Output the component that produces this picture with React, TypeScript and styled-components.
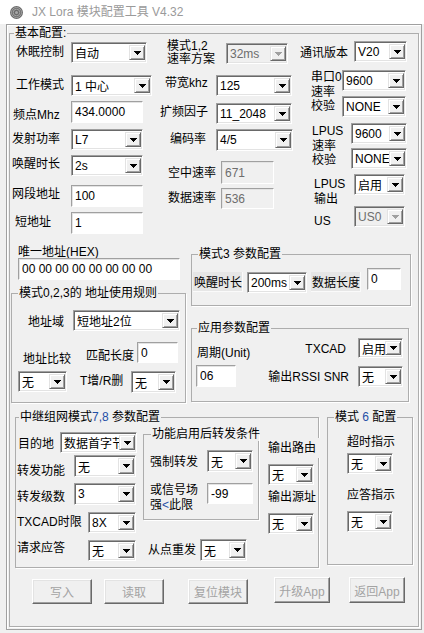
import React from "react";
import styled, { createGlobalStyle, css } from "styled-components";

const GlobalStyle = createGlobalStyle`
  *, *::before, *::after { box-sizing: border-box; }
  html, body { margin: 0; padding: 0; background: #f0f0f0; }
  body {
    font-family: "Liberation Sans", "Noto Sans CJK SC", sans-serif;
    font-size: 12px;
    color: #000;
  }
`;

const Window = styled.div`
  width: 424px;
  height: 633px;
  overflow: hidden;
  background: #f0f0f0;
`;

const TitleBar = styled.div`
  height: 24px;
  background: #ffffff;
  display: flex;
  align-items: center;
  padding-left: 10px;
  gap: 9px;
`;

const TitleText = styled.span`
  color: #9a9a9a;
  font-size: 12px;
  line-height: 14px;
  white-space: nowrap;
`;

const Frame = styled.div`
  margin-left: 6px;
  width: 416px;
  height: 606px;
  border: 1px solid #a0a0a0;
  box-shadow: inset 1px 1px 0 #fff;
  padding: 1px 0 0 2px;
`;

const GroupBox = styled.fieldset<{ $w: number; $h: number; $mt?: number; $ml?: number }>`
  flex: none;
  display: block;
  margin: ${(p) => p.$mt ?? 0}px 0 0 ${(p) => p.$ml ?? 0}px;
  padding: 0;
  min-width: 0;
  width: ${(p) => p.$w}px;
  height: ${(p) => p.$h}px;
  border: 1px solid #adadad;
  box-shadow: 1px 1px 0 #fff;
`;

const Legend = styled.legend<{ $ml: number }>`
  margin-left: ${(p) => p.$ml}px;
  padding: 0 1px;
  font-size: 12px;
  line-height: 14px;
  height: 14px;
  white-space: nowrap;
`;

const Blue = styled.span`
  color: #1f4fa6;
`;

const TopSection = styled.div`
  display: flex;
  align-items: flex-start;
`;

const MidSection = styled.div`
  display: flex;
  align-items: flex-start;
`;

const RelaySection = styled.div`
  display: flex;
  align-items: flex-start;
`;

const FlexRow = styled.div`
  display: flex;
  align-items: flex-start;
`;

const SpreadRow = styled.div`
  display: flex;
  align-items: flex-start;
  justify-content: space-between;
`;

const Column = styled.div<{ $w?: number; $ml?: number; $mt?: number; $mr?: number; $end?: boolean }>`
  flex: none;
  display: flex;
  flex-direction: column;
  align-items: ${(p) => (p.$end ? "flex-end" : "flex-start")};
  ${(p) => p.$w !== undefined && css`width: ${p.$w}px;`}
  margin: ${(p) => p.$mt ?? 0}px ${(p) => p.$mr ?? 0}px 0 ${(p) => p.$ml ?? 0}px;
`;

const Stack = styled.div<{ $gap: number }>`
  display: flex;
  flex-direction: column;
  gap: ${(p) => p.$gap}px;
`;

const Field = styled.div<{ $mt?: number; $ml?: number }>`
  display: flex;
  align-items: flex-start;
  margin-top: ${(p) => p.$mt ?? 0}px;
  margin-left: ${(p) => p.$ml ?? 0}px;
`;

const Label = styled.span<{ $w?: number; $pl?: number; $top?: number; $lh?: number; $mr?: number }>`
  display: block;
  flex: none;
  ${(p) => p.$w !== undefined && css`width: ${p.$w}px;`}
  padding-left: ${(p) => p.$pl ?? 0}px;
  margin-top: ${(p) => p.$top ?? 3}px;
  margin-right: ${(p) => p.$mr ?? 0}px;
  line-height: ${(p) => p.$lh ?? 14}px;
  white-space: nowrap;
`;

const RouteLabel = styled.span<{ $mt: number }>`
  display: block;
  width: 53px;
  height: 20px;
  margin-top: ${(p) => p.$mt}px;
  margin-right: -4px;
  line-height: 20px;
  background: #f0f0f0;
  white-space: nowrap;
`;

const CellLabel = styled.span<{ $ml: number; $mt: number }>`
  flex: none;
  display: flex;
  align-items: center;
  width: 50px;
  height: 20px;
  margin: ${(p) => p.$mt}px 0 0 ${(p) => p.$ml}px;
  padding-left: 1px;
  background: #e6e6e6;
  border-right: 1px solid #fafafa;
  border-bottom: 1px solid #fafafa;
  white-space: nowrap;
`;

const SelectFrame = styled.div<{ $w: number; $h: number; $disabled?: boolean; $ml?: number; $mt?: number }>`
  flex: none;
  display: flex;
  width: ${(p) => p.$w}px;
  height: ${(p) => p.$h}px;
  margin: ${(p) => p.$mt ?? 0}px 0 0 ${(p) => p.$ml ?? 0}px;
  padding: 2px 1px 2px 2px;
  background: ${(p) => (p.$disabled ? "#f0f0f0" : "#fff")};
  border: 1px solid;
  border-color: #a0a0a0 #fff #fff #a0a0a0;
  box-shadow: inset 1px 1px 0 #696969, inset -1px -1px 0 #e3e3e3;
`;

const SelectValue = styled.span<{ $disabled?: boolean }>`
  flex: 1;
  min-width: 0;
  display: flex;
  align-items: center;
  padding-left: 1px;
  overflow: hidden;
  white-space: nowrap;
  color: ${(p) => (p.$disabled ? "#6d6d6d" : "#000")};
`;

const DropButton = styled.span`
  flex: none;
  width: 16px;
  display: flex;
  align-items: center;
  justify-content: center;
  background: #f0f0f0;
  border: 1px solid;
  border-color: #e3e3e3 #696969 #696969 #e3e3e3;
  box-shadow: inset 1px 1px 0 #fff, inset -1px -1px 0 #a0a0a0;
`;

const TextField = styled.input<{ $w: number; $h: number; $ml?: number; $mt?: number }>`
  flex: none;
  display: block;
  width: ${(p) => p.$w}px;
  height: ${(p) => p.$h}px;
  margin: ${(p) => p.$mt ?? 0}px 0 0 ${(p) => p.$ml ?? 0}px;
  padding: 0 0 0 3px;
  font-family: "Liberation Sans", "Noto Sans CJK SC", sans-serif;
  font-size: 12px;
  color: #000;
  background: #fff;
  border: 1px solid;
  border-color: #a0a0a0 #fff #fff #a0a0a0;
  box-shadow: inset 1px 1px 0 #e3e3e3;
  outline: none;
  &:disabled {
    background: #f0f0f0;
    color: #6d6d6d;
  }
`;

const ButtonRow = styled.div`
  display: flex;
  align-items: flex-start;
  margin-top: 9px;
`;

const PushButton = styled.button<{ $w: number; $h: number; $ml: number; $mt?: number }>`
  flex: none;
  width: ${(p) => p.$w}px;
  height: ${(p) => p.$h}px;
  margin: ${(p) => p.$mt ?? 0}px 0 0 ${(p) => p.$ml}px;
  padding: 0;
  font-family: "Liberation Sans", "Noto Sans CJK SC", sans-serif;
  font-size: 12px;
  color: #a3a3a3;
  background: #f0f0f0;
  border: 1px solid;
  border-color: #fff #696969 #696969 #fff;
  box-shadow: inset -1px -1px 0 #a0a0a0, inset 1px 1px 0 #e3e3e3;
`;

function Arrow({ disabled }: { disabled?: boolean }) {
  return (
    <svg width="7" height="4" viewBox="0 0 7 4" shapeRendering="crispEdges">
      <path d="M0 0H7V1H6V2H5V3H4V4H3V3H2V2H1V1H0Z" fill={disabled ? "#a0a0a0" : "#000"} />
    </svg>
  );
}

type SelectProps = { w: number; h?: number; value: string; disabled?: boolean; ml?: number; mt?: number };

function Select({ w, h = 21, value, disabled, ml, mt }: SelectProps) {
  return (
    <SelectFrame $w={w} $h={h} $disabled={disabled} $ml={ml} $mt={mt}>
      <SelectValue $disabled={disabled}>{value}</SelectValue>
      <DropButton>
        <Arrow disabled={disabled} />
      </DropButton>
    </SelectFrame>
  );
}

function AppIcon() {
  return (
    <svg width="13" height="13" viewBox="0 0 13 13">
      <circle cx="6.5" cy="6.5" r="6.5" fill="#6b6b6b" />
      <circle cx="6.5" cy="6.5" r="5" fill="none" stroke="#a8a8a8" strokeWidth="0.9" />
      <circle cx="6.5" cy="6.5" r="3.3" fill="none" stroke="#a8a8a8" strokeWidth="0.9" />
      <circle cx="6.5" cy="6.5" r="1.5" fill="#a8a8a8" />
    </svg>
  );
}

export default function App() {
  return (
    <Window>
      <GlobalStyle />
      <TitleBar>
        <AppIcon />
        <TitleText>JX Lora 模块配置工具 V4.32</TitleText>
      </TitleBar>
      <Frame>
        <GroupBox $w={410} $h={601}>
          <Legend $ml={4}>基本配置:</Legend>

          <TopSection>
            <Column $w={150}>
              <Field $mt={2}>
                <Label $w={61} $pl={6}>休眠控制</Label>
                <Select w={76} value="自动" />
              </Field>
              <Field $mt={12}>
                <Label $w={61} $pl={6}>工作模式</Label>
                <Select w={81} value="1 中心" />
              </Field>
              <Field $mt={5}>
                <Label $w={61} $pl={3} $top={7}>频点Mhz</Label>
                <TextField $w={72} $h={22} defaultValue="434.0000" readOnly />
              </Field>
              <Field $mt={6}>
                <Label $w={61} $pl={2} $top={2.5}>发射功率</Label>
                <Select w={72} value="L7" />
              </Field>
              <Field $mt={5}>
                <Label $w={61} $pl={2} $top={2}>唤醒时长</Label>
                <Select w={72} value="2s" />
              </Field>
              <Field $mt={9}>
                <Label $w={61} $pl={2} $top={2}>网段地址</Label>
                <TextField $w={72} $h={22} defaultValue="100" readOnly />
              </Field>
              <Field $mt={5}>
                <Label $w={61} $pl={5}>短地址</Label>
                <TextField $w={72} $h={22} defaultValue="1" readOnly />
              </Field>
            </Column>

            <Column $w={137}>
              <Field $mt={3}>
                <Label $w={66} $pl={7} $top={-3} $lh={13}>
                  模式1,2
                  <br />
                  速率方案
                </Label>
                <Select w={62} value="32ms" disabled />
              </Field>
              <Field $mt={9}>
                <Label $w={56} $pl={5} $top={1}>带宽khz</Label>
                <Select w={76} value="125" />
              </Field>
              <Field $mt={7}>
                <Label $w={56} $top={1.5}>扩频因子</Label>
                <Select w={76} value="11_2048" />
              </Field>
              <Field $mt={5}>
                <Label $w={56} $pl={10} $top={3}>编码率</Label>
                <Select w={77} h={22} value="4/5" />
              </Field>
              <Field $mt={10}>
                <Label $w={61} $pl={8} $top={4.5}>空中速率</Label>
                <TextField $w={53} $h={23} defaultValue="671" disabled />
              </Field>
              <Field $mt={4}>
                <Label $w={61} $pl={8} $top={2.5}>数据速率</Label>
                <TextField $w={53} $h={21} defaultValue="536" disabled />
              </Field>
            </Column>

            <Column $w={113}>
              <Field $mt={1}>
                <Label $w={57} $pl={3} $top={4.5}>通讯版本</Label>
                <Select w={53} value="V20" />
              </Field>
              <Field $mt={8}>
                <Label $w={45} $pl={14} $top={0} $lh={14.5}>
                  串口0
                  <br />
                  速率
                  <br />
                  校验
                </Label>
                <Stack $gap={5}>
                  <Select w={64} value="9600" />
                  <Select w={64} value="NONE" />
                </Stack>
              </Field>
              <Field $mt={6}>
                <Label $w={54} $pl={15} $top={1} $lh={14.5}>
                  LPUS
                  <br />
                  速率
                  <br />
                  校验
                </Label>
                <Stack $gap={4}>
                  <Select w={56} value="9600" />
                  <Select w={56} value="NONE" />
                </Stack>
              </Field>
              <Field $mt={5}>
                <Label $w={57} $pl={17} $top={3} $lh={14.5}>
                  LPUS
                  <br />
                  输出
                </Label>
                <Select w={51} value="启用" />
              </Field>
              <Field>
                <Label $w={57} $pl={17} $top={8}>US</Label>
                <Select w={51} value="US0" disabled />
              </Field>
            </Column>
          </TopSection>

          <MidSection>
            <Column $w={176}>
              <Label $pl={8} $top={11}>唯一地址(HEX)</Label>
              <TextField $w={162} $h={22} $ml={8} $mt={-1} defaultValue="00 00 00 00 00 00 00 00" readOnly />
              <GroupBox $w={175} $h={117} $mt={6} $ml={1}>
                <Legend $ml={6}>模式0,2,3的 地址使用规则</Legend>
                <Field $mt={10}>
                  <Label $w={61} $pl={16} $top={4.5}>地址域</Label>
                  <Select w={107} value="短地址2位" />
                </Field>
                <Field $mt={11}>
                  <Column $w={68}>
                    <Label $pl={11} $top={10}>地址比较</Label>
                    <Select w={49} ml={6} mt={5} value="无" />
                  </Column>
                  <Column>
                    <Field>
                      <Label $w={57} $pl={6} $top={7}>匹配长度</Label>
                      <TextField $w={41} $h={21} defaultValue="0" readOnly />
                    </Field>
                    <Field $mt={8}>
                      <Label $w={51} $top={3}>T增/R删</Label>
                      <Select w={45} h={22} value="无" />
                    </Field>
                  </Column>
                </Field>
              </GroupBox>
            </Column>

            <Column $ml={5}>
              <GroupBox $w={220} $h={59} $mt={13}>
                <Legend $ml={6}>模式3 参数配置</Legend>
                <Field $mt={7}>
                  <CellLabel $ml={1} $mt={4}>唤醒时长</CellLabel>
                  <Select w={60} ml={4} mt={4} value="200ms" />
                  <CellLabel $ml={4} $mt={4}>数据长度</CellLabel>
                  <TextField $w={34} $h={22} $ml={6} defaultValue="0" readOnly />
                </Field>
              </GroupBox>
              <GroupBox $w={218} $h={81} $mt={15}>
                <Legend $ml={5}>应用参数配置</Legend>
                <SpreadRow>
                  <Column>
                    <Label $pl={5} $top={11}>周期(Unit)</Label>
                    <TextField $w={40} $h={22} $ml={4} $mt={5} defaultValue="06" readOnly />
                  </Column>
                  <Column $mt={3} $mr={5} $end>
                    <Field>
                      <Label $mr={12} $top={4}>TXCAD</Label>
                      <Select w={45} h={20} value="启用" />
                    </Field>
                    <Field $mt={8}>
                      <Label $mr={9} $top={4}>输出RSSI SNR</Label>
                      <Select w={45} value="无" />
                    </Field>
                  </Column>
                </SpreadRow>
              </GroupBox>
            </Column>
          </MidSection>

          <RelaySection>
            <GroupBox $w={304} $h={158} $ml={5} $mt={7}>
              <Legend $ml={3}>
                中继组网模式<Blue>7,8</Blue> 参数配置
              </Legend>
              <FlexRow>
                <Column $w={127}>
                  <Field $mt={8}>
                    <Label $w={44} $pl={2} $top={5}>目的地</Label>
                    <Select w={77} value="数据首字节" />
                  </Field>
                  <Field $mt={2}>
                    <Label $w={58} $pl={1} $top={9}>转发功能</Label>
                    <Select w={62} h={22} value="无" />
                  </Field>
                  <Field $mt={5}>
                    <Label $w={58} $pl={1} $top={7}>转发级数</Label>
                    <Select w={62} h={22} value="3" />
                  </Field>
                  <Field $mt={7}>
                    <Label $w={72} $pl={1} $top={2.5}>TXCAD时限</Label>
                    <Select w={48} value="8X" />
                  </Field>
                  <Field $mt={7}>
                    <Label $w={72} $pl={1} $top={1}>请求应答</Label>
                    <Select w={48} value="无" />
                  </Field>
                </Column>

                <Column $w={116}>
                  <GroupBox $w={116} $h={93} $mt={3}>
                    <Legend $ml={7}>功能启用后转发条件</Legend>
                    <Field $mt={9}>
                      <Label $w={63} $pl={6} $top={5}>强制转发</Label>
                      <Select w={46} h={22} value="无" />
                    </Field>
                    <Field $mt={11}>
                      <Label $w={63} $pl={6} $top={0} $lh={14.5}>
                        或信号场
                        <br />强<Blue>&lt;</Blue>此限
                      </Label>
                      <TextField $w={46} $h={21} defaultValue="-99" readOnly />
                    </Field>
                  </GroupBox>
                  <Field $mt={19}>
                    <Label $w={57} $pl={5} $top={4}>从点重发</Label>
                    <Select w={47} h={22} value="无" />
                  </Field>
                </Column>

                <Column $ml={9}>
                  <RouteLabel $mt={14}>输出路由</RouteLabel>
                  <Select w={46} mt={6} value="无" />
                  <Label $top={5}>输出源址</Label>
                  <Select w={46} mt={9} value="无" />
                </Column>
              </FlexRow>
            </GroupBox>

            <GroupBox $w={86} $h={155} $ml={8} $mt={7}>
              <Legend $ml={6}>
                模式 <Blue>6</Blue> 配置
              </Legend>
              <Label $pl={19} $top={11}>超时指示</Label>
              <Select w={46} ml={19} mt={4} value="无" />
              <Label $pl={19} $top={14}>应答指示</Label>
              <Select w={46} ml={19} mt={9} value="无" />
            </GroupBox>
          </RelaySection>

          <ButtonRow>
            <PushButton $w={60} $h={25} $ml={22} $mt={2}>写入</PushButton>
            <PushButton $w={60} $h={25} $ml={12} $mt={2}>读取</PushButton>
            <PushButton $w={60} $h={25} $ml={24} $mt={2}>复位模块</PushButton>
            <PushButton $w={56} $h={26} $ml={26}>升级App</PushButton>
            <PushButton $w={56} $h={26} $ml={19}>返回App</PushButton>
          </ButtonRow>
        </GroupBox>
      </Frame>
    </Window>
  );
}
